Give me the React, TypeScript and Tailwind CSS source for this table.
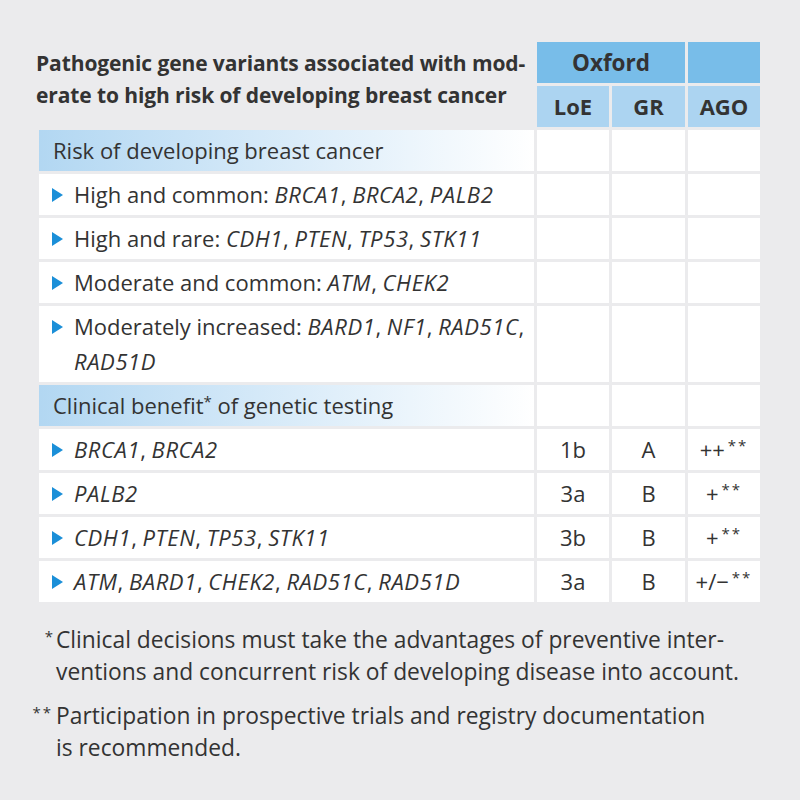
import type { ReactNode } from "react";

const font = { fontFamily: "'Open Sans', Lato, sans-serif" };

function G({ children }: { children: ReactNode }) {
  return <i className="tracking-[0.6px]">{children}</i>;
}

function Marker() {
  return (
    <svg width="11" height="14" viewBox="0 0 11 14" className="shrink-0 mt-[11px]">
      <polygon points="0,0 11,7 0,14" fill="#1b8fd8" />
    </svg>
  );
}

function Section({ children }: { children: ReactNode }) {
  return (
    <>
      <div className="bg-gradient-to-r from-[#b2d7f2] to-white px-[14px] py-[3px] leading-[35px]">{children}</div>
      <div className="bg-white" />
      <div className="bg-white" />
      <div className="bg-white" />
    </>
  );
}

interface RowProps {
  children: ReactNode;
  loe?: string;
  gr?: string;
  ago?: ReactNode;
}

function Row({ children, loe, gr, ago }: RowProps) {
  return (
    <>
      <div className="bg-white flex items-start gap-[11px] pl-[13px] pr-2 py-[3px]">
        <Marker />
        <div className="leading-[35px] whitespace-nowrap">{children}</div>
      </div>
      <div className="bg-white text-center leading-[35px] py-[3px]">{loe}</div>
      <div className="bg-white text-center leading-[35px] py-[3px]">{gr}</div>
      <div className="bg-white text-center leading-[35px] py-[3px] whitespace-nowrap">{ago}</div>
    </>
  );
}

function Stars({ n }: { n: number }) {
  return <sup className="text-[15px] ml-[3px] tracking-[2px]">{"*".repeat(n)}</sup>;
}

export default function App() {
  return (
    <div className="w-[800px] h-[800px] bg-[#ebebed] text-[#333] pt-[42px]" style={font}>
      <div className="grid grid-cols-[495px_72px_73px_72px] gap-[3px] ml-[39px] text-[22px]">
        <div className="row-span-2 -ml-[3px] font-bold text-[21px] tracking-[-0.1px] leading-[32px] pt-[5px] whitespace-nowrap">
          Pathogenic gene variants associated with mod-
          <br />
          erate to high risk of developing breast cancer
        </div>
        <div className="col-span-2 bg-[#78bde9] font-bold text-center leading-[41px] text-[22.5px]">Oxford</div>
        <div className="bg-[#78bde9]" />
        <div className="bg-[#acd4f1] font-bold text-center leading-[41px]">LoE</div>
        <div className="bg-[#acd4f1] font-bold text-center leading-[41px]">GR</div>
        <div className="bg-[#acd4f1] font-bold text-center leading-[41px]">AGO</div>

        <Section>Risk of developing breast cancer</Section>
        <Row>
          High and common: <G>BRCA1</G>, <G>BRCA2</G>, <G>PALB2</G>
        </Row>
        <Row>
          High and rare: <G>CDH1</G>, <G>PTEN</G>, <G>TP53</G>, <G>STK11</G>
        </Row>
        <Row>
          Moderate and common: <G>ATM</G>, <G>CHEK2</G>
        </Row>
        <Row>
          Moderately increased: <G>BARD1</G>, <G>NF1</G>, <G>RAD51C</G>,
          <br />
          <G>RAD51D</G>
        </Row>

        <Section>
          Clinical benefit<sup className="text-[15px]">*</sup> of genetic testing
        </Section>
        <Row loe="1b" gr="A" ago={<>++<Stars n={2} /></>}>
          <G>BRCA1</G>, <G>BRCA2</G>
        </Row>
        <Row loe="3a" gr="B" ago={<>+<Stars n={2} /></>}>
          <G>PALB2</G>
        </Row>
        <Row loe="3b" gr="B" ago={<>+<Stars n={2} /></>}>
          <G>CDH1</G>, <G>PTEN</G>, <G>TP53</G>, <G>STK11</G>
        </Row>
        <Row loe="3a" gr="B" ago={<>+/−<Stars n={2} /></>}>
          <G>ATM</G>, <G>BARD1</G>, <G>CHEK2</G>, <G>RAD51C</G>, <G>RAD51D</G>
        </Row>
      </div>

      <div className="mt-[22px] text-[22.8px] leading-[32px] flex flex-col gap-[12px]">
        <div className="flex">
          <span className="w-[56px] shrink-0 text-right pr-[3px] text-[15px] leading-[24px]">*</span>
          <p className="whitespace-nowrap">
            Clinical decisions must take the advantages of preventive inter-
            <br />
            ventions and concurrent risk of developing disease into account.
          </p>
        </div>
        <div className="flex">
          <span className="w-[56px] shrink-0 text-right pr-[3px] text-[15px] leading-[24px] tracking-[2px]">**</span>
          <p className="whitespace-nowrap">
            Participation in prospective trials and registry documentation
            <br />
            is recommended.
          </p>
        </div>
      </div>
    </div>
  );
}
